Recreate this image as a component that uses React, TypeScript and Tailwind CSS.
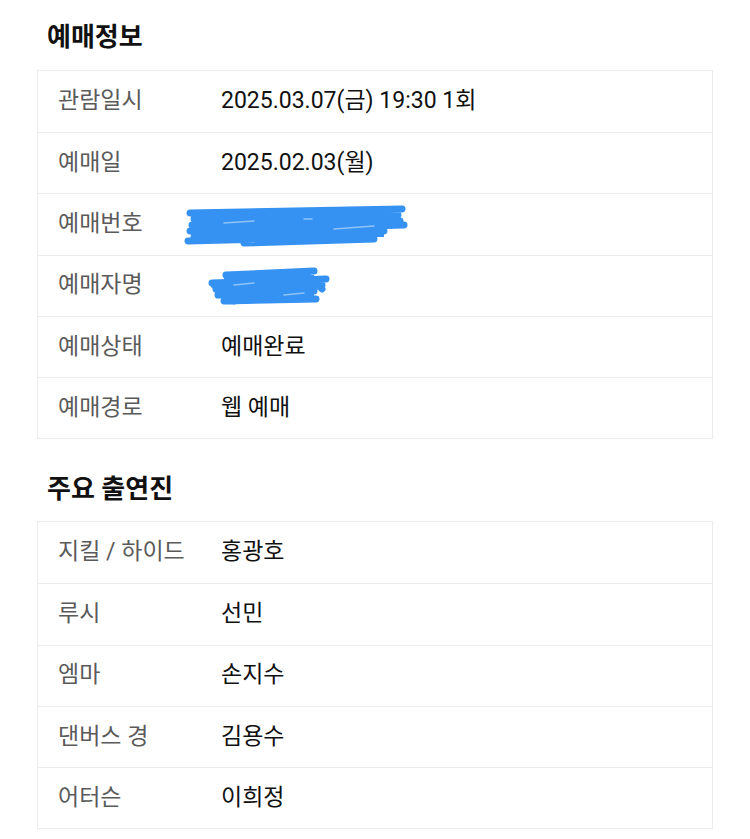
import React from "react";

const booking: { label: string; value?: string; scribble?: "long" | "short" }[] = [
  { label: "관람일시", value: "2025.03.07(금) 19:30 1회" },
  { label: "예매일", value: "2025.02.03(월)" },
  { label: "예매번호", scribble: "long" },
  { label: "예매자명", scribble: "short" },
  { label: "예매상태", value: "예매완료" },
  { label: "예매경로", value: "웹 예매" },
];

const cast = [
  { label: "지킬 / 하이드", value: "홍광호" },
  { label: "루시", value: "선민" },
  { label: "엠마", value: "손지수" },
  { label: "댄버스 경", value: "김용수" },
  { label: "어터슨", value: "이희정" },
];

function Scribble({ kind }: { kind: "long" | "short" }) {
  if (kind === "long") {
    return (
      <svg width="230" height="44" viewBox="0 0 230 44" className="-ml-[37px] mt-[2px]">
        <rect x="20" y="8" width="180" height="26" fill="#3592f2" />
        <g stroke="#3592f2" strokeWidth="7" strokeLinecap="round" strokeLinejoin="round" fill="none">
          <path d="M6 10 L218 6 M10 16 L214 12 M8 22 L216 18 M6 28 L220 22 M12 32 L200 28 M4 38 L150 34 M60 40 L190 36 M20 14 L40 36 M14 26 L206 14 M10 34 L196 20" />
        </g>
        <g stroke="#8fc3f7" strokeWidth="1.5" strokeLinecap="round" fill="none">
          <path d="M40 20 L70 18 M150 26 L190 23 M120 16 L128 16" />
        </g>
      </svg>
    );
  }
  return (
    <svg width="132" height="40" viewBox="0 0 132 40" className="-ml-[17px] mt-[2px]">
      <rect x="20" y="8" width="90" height="22" fill="#3592f2" />
      <g stroke="#3592f2" strokeWidth="7" strokeLinecap="round" strokeLinejoin="round" fill="none">
        <path d="M22 8 L110 4 M8 16 L122 12 M12 22 L118 18 M14 28 L110 24 M20 34 L112 32 M10 18 L30 34 M100 6 L118 22" />
      </g>
      <g stroke="#8fc3f7" strokeWidth="1.5" strokeLinecap="round" fill="none">
        <path d="M30 18 L50 16 M80 28 L100 26" />
      </g>
    </svg>
  );
}

function Row({ label, children }: { label: string; children: React.ReactNode }) {
  return (
    <div className="grid grid-cols-[183px_1fr] items-center h-[61.2px] border-t border-[#ececec] first:border-t-0">
      <div className="pl-5 text-[#5a5a5a]">{label}</div>
      <div className="text-[#111111] flex items-center">{children}</div>
    </div>
  );
}

export default function App() {
  return (
    <div
      className="w-[750px] min-h-[839px] bg-white px-[37px] pt-[22px] text-[23px]"
      style={{ fontFamily: 'Roboto, "Noto Sans CJK KR", "Noto Sans", sans-serif' }}
    >
      <h2 className="ml-[10px] mb-[18px] leading-[30px] text-[26px] font-bold text-[#111111]">예매정보</h2>
      <div className="border border-[#ececec]">
        {booking.map((r) => (
          <Row key={r.label} label={r.label}>
            {r.scribble ? <Scribble kind={r.scribble} /> : r.value}
          </Row>
        ))}
      </div>

      <h2 className="ml-[10px] mt-[35px] mb-[17px] leading-[30px] text-[26px] font-bold text-[#111111]">주요 출연진</h2>
      <div className="border border-[#ececec]">
        {cast.map((r) => (
          <Row key={r.label} label={r.label}>
            {r.value}
          </Row>
        ))}
      </div>
    </div>
  );
}
